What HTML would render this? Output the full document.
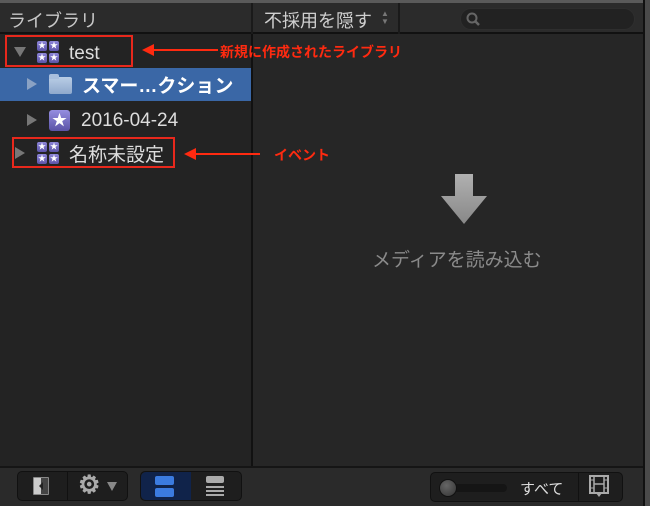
<!DOCTYPE html>
<html><head><meta charset="utf-8"><style>
*{margin:0;padding:0;box-sizing:border-box}
body{width:650px;height:506px;background:#262626;font-family:"Liberation Sans","Noto Sans CJK JP",sans-serif;position:relative;overflow:hidden}
.a{position:absolute}
.ann{color:#ff2a10;font-weight:bold;font-size:14px}
.red{border:2px solid #e8281c}
.tri{width:0;height:0;border-top:6px solid transparent;border-bottom:6px solid transparent;border-left:10px solid #777}
.lib{width:22px;height:22px;display:grid;grid-template-columns:10px 10px;gap:2px}
.lib i{background:linear-gradient(#8d86d8,#5c54a8);border-radius:2px;color:#fff;font-size:8px;line-height:10px;text-align:center;font-style:normal}
.btn{background:#1e1e1e;border:1px solid #111;border-radius:5px}
</style></head><body>
<div class="a" style="left:0;top:0;width:650px;height:3px;background:#5a5a5a"></div>
<div class="a" style="left:643px;top:0;width:7px;height:506px;background:#4a4a4a;border-left:2px solid #111"></div>
<div class="a" style="left:0;top:3px;width:643px;height:31px;background:#2b2b2b;border-bottom:2px solid #111"></div>
<div class="a" style="left:8px;top:7px;color:#c8c8c8;font-size:18px">ライブラリ</div>
<div class="a" style="left:251px;top:3px;width:2px;height:31px;background:#1a1a1a"></div>
<div class="a" style="left:264px;top:7px;color:#cfcfcf;font-size:18px">不採用を隠す</div>
<div class="a" style="left:381px;top:10px;color:#777;font-size:8px;line-height:8px">▲<br>▼</div>
<div class="a" style="left:398px;top:3px;width:2px;height:31px;background:#1a1a1a"></div>
<div class="a" style="left:460px;top:8px;width:175px;height:22px;border-radius:11px;background:#222;border:1px solid #2e2e2e"></div>
<svg class="a" style="left:466px;top:12px" width="16" height="16"><circle cx="6" cy="6" r="4.5" stroke="#666" stroke-width="2" fill="none"/><line x1="9" y1="9" x2="13" y2="13" stroke="#666" stroke-width="2.5"/></svg>
<div class="a" style="left:0;top:34px;width:251px;height:432px;background:#232323"></div>
<div class="a" style="left:251px;top:34px;width:2px;height:432px;background:#111"></div>
<div class="a" style="left:14px;top:47px;width:0;height:0;border-left:6px solid transparent;border-right:6px solid transparent;border-top:10px solid #777"></div>
<div class="a lib" style="left:37px;top:41px"><i>★</i><i>★</i><i>★</i><i>★</i></div>
<div class="a" style="left:69px;top:43px;color:#ddd;font-size:19px">test</div>
<div class="a red" style="left:5px;top:35px;width:128px;height:32px"></div>
<div class="a" style="left:0;top:68px;width:251px;height:33px;background:#3a67a6"></div>
<div class="a tri" style="left:27px;top:78px;border-left-color:#8aa2c4"></div>
<div class="a" style="left:49px;top:77px;width:23px;height:17px;background:linear-gradient(#b9cde6,#8fa9cc);border-radius:2px"></div>
<div class="a" style="left:49px;top:74px;width:10px;height:5px;background:#a9bfdd;border-radius:2px 2px 0 0"></div>
<div class="a" style="left:82px;top:71px;color:#fff;font-size:19px;font-weight:bold">スマー…クション</div>
<div class="a tri" style="left:27px;top:114px"></div>
<div class="a" style="left:49px;top:110px;width:21px;height:21px;border-radius:3px;background:linear-gradient(#958ee0,#5a52a6);color:#fff;text-align:center;font-size:15px;line-height:21px">★</div>
<div class="a" style="left:81px;top:110px;color:#ddd;font-size:19px">2016-04-24</div>
<div class="a tri" style="left:15px;top:147px"></div>
<div class="a lib" style="left:37px;top:142px"><i>★</i><i>★</i><i>★</i><i>★</i></div>
<div class="a" style="left:69px;top:140px;color:#ddd;font-size:19px">名称未設定</div>
<div class="a red" style="left:12px;top:137px;width:163px;height:31px"></div>
<svg class="a" style="left:140px;top:40px" width="80" height="20"><line x1="10" y1="10" x2="78" y2="10" stroke="#ff2a10" stroke-width="2"/><polygon points="2,10 14,4 14,16" fill="#ff2a10"/></svg>
<div class="a ann" style="left:220px;top:42px">新規に作成されたライブラリ</div>
<svg class="a" style="left:182px;top:144px" width="80" height="20"><line x1="10" y1="10" x2="78" y2="10" stroke="#ff2a10" stroke-width="2"/><polygon points="2,10 14,4 14,16" fill="#ff2a10"/></svg>
<div class="a ann" style="left:274px;top:145px">イベント</div>
<svg class="a" style="left:440px;top:174px" width="48" height="52"><defs><linearGradient id="g" x1="0" y1="0" x2="0" y2="1"><stop offset="0" stop-color="#b0b0b0"/><stop offset="1" stop-color="#888"/></linearGradient></defs><polygon points="15,0 33,0 33,22 47,22 24,50 1,22 15,22" fill="url(#g)"/></svg>
<div class="a" style="left:372px;top:245px;color:#8a8a8a;font-size:19px">メディアを読み込む</div>
<div class="a" style="left:0;top:466px;width:643px;height:40px;background:#2a2a2a;border-top:2px solid #151515"></div>
<div class="a btn" style="left:17px;top:471px;width:111px;height:30px"></div>
<div class="a" style="left:67px;top:472px;width:1px;height:28px;background:#111"></div>
<div class="a" style="left:33px;top:477px;width:16px;height:18px;border:1px solid #888;border-radius:1px;background:linear-gradient(90deg,#ccc 0 50%,#444 50%)"></div>
<div class="a" style="left:39px;top:482px;width:0;height:0;border-top:4px solid transparent;border-bottom:4px solid transparent;border-right:4px solid #222"></div>
<div class="a" style="left:78px;top:470px;color:#aaa;font-size:25px;font-weight:bold">⚙</div>
<div class="a" style="left:107px;top:482px;width:0;height:0;border-left:5px solid transparent;border-right:5px solid transparent;border-top:9px solid #888"></div>
<div class="a btn" style="left:140px;top:471px;width:102px;height:30px"></div>
<div class="a" style="left:141px;top:472px;width:50px;height:28px;background:#10234a;border-radius:5px 0 0 5px"></div>
<div class="a" style="left:155px;top:476px;width:19px;height:9px;background:#3b7be0;border-radius:2px"></div>
<div class="a" style="left:155px;top:488px;width:19px;height:9px;background:#3b7be0;border-radius:2px"></div>
<div class="a" style="left:206px;top:476px;width:18px;height:7px;background:#aaa;border-radius:2px"></div>
<div class="a" style="left:206px;top:486px;width:18px;height:2px;background:#aaa"></div>
<div class="a" style="left:206px;top:490px;width:18px;height:2px;background:#aaa"></div>
<div class="a" style="left:206px;top:494px;width:18px;height:2px;background:#aaa"></div>
<div class="a btn" style="left:430px;top:472px;width:193px;height:30px"></div>
<div class="a" style="left:578px;top:473px;width:1px;height:28px;background:#111"></div>
<div class="a" style="left:447px;top:484px;width:60px;height:8px;background:#151515;border-radius:4px"></div>
<div class="a" style="left:439px;top:479px;width:18px;height:18px;border-radius:50%;background:radial-gradient(circle at 40% 35%,#666,#333);border:1px solid #111"></div>
<div class="a" style="left:520px;top:478px;color:#ddd;font-size:15px">すべて</div>
<svg class="a" style="left:588px;top:475px" width="24" height="24"><rect x="2" y="1" width="18" height="17" fill="none" stroke="#aaa" stroke-width="2"/><line x1="6" y1="1" x2="6" y2="18" stroke="#aaa" stroke-width="1.5"/><line x1="16" y1="1" x2="16" y2="18" stroke="#aaa" stroke-width="1.5"/><line x1="6" y1="9" x2="16" y2="9" stroke="#aaa" stroke-width="1.5"/><line x1="2" y1="5" x2="6" y2="5" stroke="#aaa"/><line x1="2" y1="13" x2="6" y2="13" stroke="#aaa"/><line x1="16" y1="5" x2="20" y2="5" stroke="#aaa"/><line x1="16" y1="13" x2="20" y2="13" stroke="#aaa"/><polygon points="8,18 14,18 11,22" fill="#aaa"/></svg>
</body></html>
